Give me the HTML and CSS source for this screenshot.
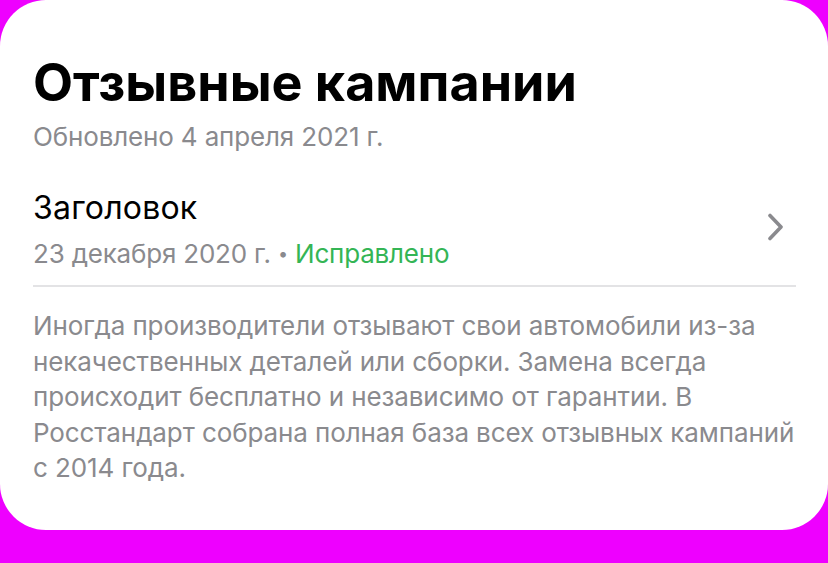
FILE: index.html
```html
<!DOCTYPE html>
<html lang="ru">
<head>
<meta charset="utf-8">
<link rel="stylesheet" href="styles.css">
</head>
<body>
<div class="card">
  <h1 class="title">Отзывные кампании</h1>
  <div class="updated">Обновлено 4 апреля 2021 г.</div>
  <div class="item">
    <div class="item-text">
      <div class="item-title">Заголовок</div>
      <div class="item-meta">23 декабря 2020 г. <span class="dot">•</span> <span class="status">Исправлено</span></div>
    </div>
    <svg class="chevron" width="16" height="28" viewBox="0 0 16 28" aria-hidden="true">
      <path d="M3 2.5 L14 14 L3 25.5" fill="none" stroke="#8a8a8e" stroke-width="3.6" stroke-linecap="round" stroke-linejoin="round"/>
    </svg>
  </div>
  <div class="separator"></div>
  <p class="body">Иногда производители отзывают свои автомобили из-за некачественных деталей или сборки. Замена всегда происходит бесплатно и независимо от гарантии. В Росстандарт собрана полная база всех отзывных кампаний с 2014 года.</p>
</div>
</body>
</html>
```

FILE: styles.css
```css
html, body {
  margin: 0;
  padding: 0;
}
body {
  background: #ee00ff;
  width: 828px;
  height: 563px;
  overflow: hidden;
  font-family: Inter, "Noto Sans", sans-serif;
}
.card {
  background: #ffffff;
  height: 530px;
  border-radius: 46px;
  box-sizing: border-box;
  padding: 51px 32px 0 33px;
}
.title {
  margin: 0;
  font-size: 52px;
  font-weight: 700;
  line-height: 64px;
  color: #000;
}
.updated {
  margin-top: 7px;
  font-size: 26px;
  line-height: 30px;
  letter-spacing: -0.15px;
  color: #8a8a8e;
}
.item {
  display: flex;
  align-items: center;
  justify-content: space-between;
  margin-top: 37px;
}
.item-title {
  font-size: 32px;
  line-height: 38px;
  letter-spacing: 0.2px;
  color: #000;
}
.item-meta {
  margin-top: 12px;
  font-size: 26px;
  line-height: 30px;
  letter-spacing: -0.2px;
  color: #8a8a8e;
}
.dot {
  font-size: 18px;
  vertical-align: 3px;
}
.status {
  color: #34b555;
}
.chevron {
  flex: none;
  margin-right: 13px;
  margin-bottom: 5px;
}
.separator {
  height: 2px;
  background: #e3e3e5;
  margin-top: 16px;
}
.body {
  margin: 21px 0 0;
  font-size: 26px;
  line-height: 35.6px;
  letter-spacing: -0.1px;
  color: #8a8a8e;
}
```
